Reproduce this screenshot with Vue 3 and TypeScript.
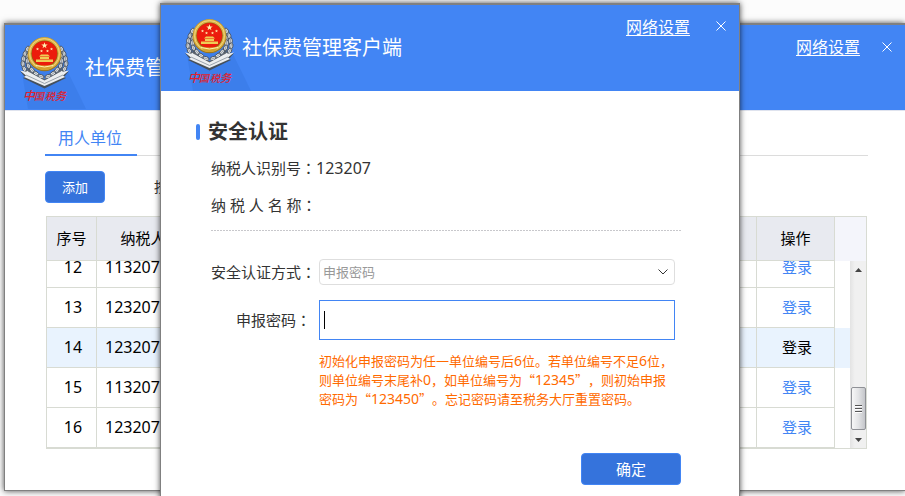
<script setup lang="ts">
import { defineComponent, h, ref } from 'vue'

interface Unit {
  index: number
  taxId: string
}

const units: Unit[] = [
  { index: 12, taxId: '1132072' },
  { index: 13, taxId: '1232070' },
  { index: 14, taxId: '1232072' },
  { index: 15, taxId: '1132072' },
  { index: 16, taxId: '1232070' },
]

const selected = ref(14)
const authMode = ref('password')
const password = ref('')

// Leaves of the wreath, as [x, y, rotation] on the left side; the right side mirrors them.
const leaves: number[][] = [
  [7.5, 12, 28], [5, 17, 12], [3.5, 22, 0], [3, 27, -12], [4.5, 32, -28], [8, 36, -45], [12, 39.5, -58], [17, 42, -70],
  [8, 19, 15], [7.5, 24, 0], [8.5, 29, -18], [12, 33, -38], [16, 36.5, -56], [21, 39.5, -72],
]

const Emblem = defineComponent({
  setup() {
    const leaf = (l: number[], key: string) =>
      h('g', { key, transform: `translate(${l[0]} ${l[1]}) rotate(${l[2]})` }, [
        h('ellipse', { rx: 1.9, ry: 3.1, fill: '#dfe2e5', stroke: '#3d4650', 'stroke-width': 0.8 }),
        h('path', { d: 'M0 -2.4V2.6', stroke: '#737b84', 'stroke-width': 0.6 }),
      ])
    const star = (x: number, y: number, s: number) =>
      h('path', {
        transform: `translate(${x} ${y}) scale(${s})`,
        d: 'M0 -4L1 -1.2L4 -1.2L1.6 .6L2.4 3.4L0 1.7L-2.4 3.4L-1.6 .6L-4 -1.2L-1 -1.2Z',
        fill: '#fff0b0',
      })
    return () =>
      h('svg', { width: 66, height: 72, viewBox: '0 0 66 72', 'aria-hidden': 'true' }, [
        h('path', { d: 'M2 36L8 72H66L46 31Z', fill: '#3b7ce9', opacity: 0.8 }),
        h('path', { d: 'M5 24Q8 36 24.500 42Q41 36 44 24L40 38L24.500 46L9 38Z', fill: '#59626c' }),
        h('g', leaves.map((l, i) => leaf(l, `l${i}`))),
        h('g', { transform: 'translate(49 0) scale(-1 1)' }, leaves.map((l, i) => leaf(l, `r${i}`))),
        h('path', { d: 'M0 34L24.500 44L49 34L44 40L46 41L24.500 51.500L3 41L5 40Z', fill: '#46505b' }),
        h('path', { d: 'M0 33.500L10 35.500L24.500 43.500L39 35.500L49 33.500L43 38.500L45 40L24.500 49L4 40L6 38.500Z', fill: '#eceef0' }),
        h('path', { d: 'M6 38L24.500 46.500L43 38', fill: 'none', stroke: '#9aa2ab', 'stroke-width': 1 }),
        h('circle', { cx: 24.5, cy: 17.2, r: 17, fill: '#9c7620' }),
        h('circle', { cx: 24.5, cy: 16.7, r: 16.4, fill: '#dbb347' }),
        h('circle', { cx: 24.5, cy: 16.6, r: 15, fill: 'none', stroke: '#f5dd86', 'stroke-width': 0.8 }),
        h('circle', { cx: 24.5, cy: 16.8, r: 13.2, fill: '#8f5b12' }),
        h('circle', { cx: 24.5, cy: 16.5, r: 12.6, fill: '#ec1c0c' }),
        star(24.5, 8.5, 0.8),
        star(17.5, 12, 0.4),
        star(21.5, 14, 0.4),
        star(27.5, 14, 0.4),
        star(31.5, 12, 0.4),
        h('path', { d: 'M19 19.500L21 17.500H28L30 19.500ZM20 20H29V22H20ZM16 22.500H33V25H16Z', fill: '#f0cd55' }),
        h('path', { d: 'M15 27Q24.500 30 34 27L30 32Q24.500 34 19 32Z', fill: '#d7a22e' }),
        h('path', { d: 'M16 28.500Q24.500 31.500 33 28.500', fill: 'none', stroke: '#fff0ae', 'stroke-width': 1 }),
        h('text', {
          y: 63, fill: '#e0222e', 'font-style': 'italic', 'font-weight': 500,
          'font-family': '"Noto Sans CJK SC", sans-serif',
        }, [
          h('tspan', { x: 3, 'font-size': 12 }, '中'),
          h('tspan', { x: 14, 'font-size': 10 }, '国'),
          h('tspan', { x: 25, 'font-size': 10 }, '税'),
          h('tspan', { x: 35, 'font-size': 11 }, '务'),
        ]),
      ])
  },
})
</script>

<template>
  <div class="desktop">
    <main class="window">
      <header class="titlebar">
        <Emblem class="emblem" />
        <h1 class="title">社保费管理客户端</h1>
        <a class="settings" href="#">网络设置</a>
        <button class="close" type="button" aria-label="关闭">
          <svg width="10" height="10" viewBox="0 0 10 10"><path d="M.5 .5L9.500 9.500M9.500 .5L.5 9.500" /></svg>
        </button>
      </header>

      <div class="content">
        <nav class="tabs"><a class="tab" href="#">用人单位</a></nav>
        <div class="toolbar">
          <button class="primary add" type="button">添加</button>
          <span>按单位查询</span>
        </div>

        <div class="grid">
          <div class="grid-head">
            <table>
              <colgroup><col class="c-index" /><col class="c-id" /><col /><col class="c-action" /></colgroup>
              <thead>
                <tr><th>序号</th><th>纳税人识别号</th><th>纳税人名称</th><th>操作</th></tr>
              </thead>
            </table>
          </div>
          <div class="grid-body">
            <div class="viewport">
              <div v-for="unit in units" :key="unit.index" class="row" :class="{ selected: unit.index === selected }">
                <table>
                  <colgroup><col class="c-index" /><col class="c-id" /><col /><col class="c-action" /></colgroup>
                  <tbody>
                    <tr @click="selected = unit.index">
                      <td class="num center">{{ unit.index }}</td>
                      <td class="num">{{ unit.taxId }}</td>
                      <td></td>
                      <td class="center"><a href="#">登录</a></td>
                    </tr>
                  </tbody>
                </table>
              </div>
            </div>
            <div class="scrollbar" aria-hidden="true">
              <svg width="7" height="4" viewBox="0 0 7 4"><path d="M0 4L3.500 0L7 4Z" /></svg>
              <div class="thumb"><i></i><i></i><i></i></div>
              <svg width="7" height="4" viewBox="0 0 7 4"><path d="M0 0L3.500 4L7 0Z" /></svg>
            </div>
          </div>
        </div>
      </div>
    </main>

    <section class="window dialog" role="dialog" aria-labelledby="auth-title">
      <header class="titlebar">
        <Emblem class="emblem" />
        <span class="title">社保费管理客户端</span>
        <a class="settings" href="#">网络设置</a>
        <button class="close" type="button" aria-label="关闭">
          <svg width="10" height="10" viewBox="0 0 10 10"><path d="M.5 .5L9.500 9.500M9.500 .5L.5 9.500" /></svg>
        </button>
      </header>

      <form class="auth" @submit.prevent>
        <h2 id="auth-title">安全认证</h2>
        <div class="details">
          <p>纳税人识别号<span class="colon">：</span><span class="num">123207</span></p>
          <p>纳 税 人 名 称<span class="colon">：</span></p>
        </div>
        <div class="fields">
          <label for="mode">安全认证方式<span class="colon">：</span></label>
          <div class="select">
            <select id="mode" v-model="authMode">
              <option value="password">申报密码</option>
            </select>
            <svg width="10" height="6" viewBox="0 0 10 6"><path d="M.5 .5L5 5L9.500 .5" /></svg>
          </div>
          <label class="inset" for="password">申报密码<span class="colon">：</span></label>
          <input id="password" v-model="password" type="password" />
          <p class="hint">
            初始化申报密码为任一单位编号后<b>6</b>位。若单位编号不足<b>6</b>位，<br />则单位编号末尾补<b>0</b>，如单位编号为“<b>12345</b>”，则初始申报<br />密码为“<b>123450</b>”。忘记密码请至税务大厅重置密码。
          </p>
        </div>
        <button class="primary confirm" type="submit">确定</button>
      </form>
    </section>
  </div>
</template>

<style>
body {
  margin: 0;
}
</style>

<style scoped>
.desktop {
  position: relative;
  box-sizing: border-box;
  display: flex;
  min-height: 100vh;
  padding: 23px 0 5px 4px;
  overflow: hidden;
  background: #fcfcfc;
  color: #333;
  font-family: "Noto Sans", "Noto Sans CJK SC", sans-serif;
  font-size: 15px;
  line-height: 24px;
}

.window {
  box-sizing: border-box;
  flex: 1;
  min-width: 0;
  border: 1px solid #808080;
  border-top-width: 2px;
  border-right: 0;
  background: #fff;
  box-shadow: 0 0 6px rgba(0, 0, 0, 0.7);
}

.dialog {
  position: absolute;
  inset: 3px 165px -12px 160px;
  border-right: 1px solid #808080;
}

.titlebar {
  display: flex;
  align-items: flex-start;
  box-sizing: border-box;
  height: 86px;
  padding: 12px 13px 0 15px;
  border-bottom: 1px solid #dfe3ee;
  background: #4285f4;
}

.dialog .titlebar {
  padding-top: 14px;
  padding-left: 24px;
  border-bottom: 0;
}

.emblem {
  flex: none;
}

.title {
  flex: 1;
  margin: 17px 0 0 -1px;
  color: #fff;
  font-size: 20px;
  font-weight: 400;
  line-height: 28px;
  white-space: nowrap;
}

.dialog .title {
  margin: 15px 0 0 -9px;
}

.settings {
  color: #fff;
  font-size: 16px;
  line-height: 24px;
  text-decoration: underline;
  text-underline-offset: 2px;
}

.titlebar .settings {
  margin-top: -2px;
}

.dialog .titlebar .settings {
  margin-top: -4px;
}

.close {
  display: flex;
  margin: 0 0 0 22px;
  padding: 5px 0;
  border: 0;
  background: none;
}

.dialog .close {
  margin: -3px 0 0 26px;
}

.close svg {
  fill: none;
  stroke: #fff;
}

.content {
  padding: 13px 37px 41px 40px;
}

.tabs {
  display: flex;
  height: 31px;
  border-bottom: 1px solid #dcdcdc;
}

.tab {
  height: 30px;
  padding: 0 15px 0 13px;
  border-bottom: 2px solid #4285f4;
  color: #4285f4;
  font-size: 16px;
  line-height: 28px;
  text-decoration: none;
}

.toolbar {
  display: flex;
  align-items: center;
  gap: 49px;
  padding: 15px 0 13px;
  font-size: 14px;
}

.primary {
  height: 32px;
  padding: 0;
  border: 1px solid #4285f4;
  border-radius: 4px;
  background: #3573dc;
  color: #fff;
  font: inherit;
}

.add {
  width: 60px;
  font-size: 13px;
}

.grid {
  margin: 0 1px;
  border: 1px solid #d8dbd3;
  color: #000;
}

.grid table {
  width: 100%;
  border-spacing: 0;
  table-layout: fixed;
}

.c-index {
  width: 50px;
}

.c-id {
  width: 138px;
}

.c-action {
  width: 78px;
}

.grid th,
.grid td {
  box-sizing: border-box;
  padding: 0 0 2px;
  border-right: 1px solid #d8dbd3;
  border-bottom: 1px solid #d8dbd3;
}

.grid th {
  height: 44px;
  background: #e8eaf0;
  font-weight: 400;
}

.grid td {
  height: 40px;
  padding-left: 8px;
}

.grid td.center {
  padding-left: 3px;
  text-align: center;
}

.grid-head {
  padding-right: 31px;
  background: #f4f5fb;
}

.grid-body {
  display: flex;
  height: 187px;
}

.viewport {
  display: flex;
  flex: 1;
  flex-direction: column;
  justify-content: flex-end;
  min-width: 0;
  overflow: hidden;
}

.row {
  flex: none;
  padding-right: 15px;
}

.row.selected {
  background: #e9f3fe;
}

.row a {
  color: #4285f4;
  text-decoration: none;
}

.row.selected a {
  color: #000;
}

.scrollbar {
  display: flex;
  flex-direction: column;
  align-items: center;
  box-sizing: border-box;
  width: 16px;
  padding: 7px 0 6px;
  background: linear-gradient(90deg, #e3e3e3, #f0f0f0 30%, #f0f0f0);
}

.scrollbar svg {
  fill: #444;
}

.thumb {
  display: flex;
  flex-direction: column;
  align-items: center;
  justify-content: center;
  gap: 1px;
  box-sizing: border-box;
  width: 15px;
  height: 43px;
  margin: auto 0 8px;
  border: 1px solid #8f9196;
  border-radius: 2px;
  background: linear-gradient(90deg, #f7f7f7, #e2e3e5 50%, #c4c6ca);
}

.thumb i {
  width: 7px;
  height: 1px;
  border-bottom: 1px solid #fff;
  background: #555;
}

.num {
  font-size: 16px;
}

.colon {
  font-family: "Noto Sans CJK TC", sans-serif;
}

.auth {
  display: flex;
  flex-direction: column;
  padding: 27px 58px 0 35px;
}

.auth p {
  margin: 0;
}

h2 {
  display: flex;
  align-items: center;
  gap: 8px;
  margin: 0 0 10px;
  font-size: 20px;
  line-height: 28px;
}

h2::before {
  width: 4px;
  height: 16px;
  border-radius: 2px;
  background: #4285f4;
  content: "";
}

.details {
  display: grid;
  gap: 13px;
  margin-left: 15px;
  padding-bottom: 14px;
  background: repeating-linear-gradient(90deg, #c8c8cc 0 2px, #fff 2px 3px) 0 100% / 100% 1px no-repeat;
}

.fields {
  display: grid;
  grid-template-columns: 105px 1fr;
  column-gap: 3px;
  align-items: center;
  margin: 28px 6px 45px 15px;
}

label {
  text-align: right;
  white-space: nowrap;
}

.inset {
  padding-right: 5px;
}

.select {
  display: grid;
  align-items: center;
  margin-bottom: 15px;
}

label[for="mode"] {
  margin-bottom: 15px;
}

.select > * {
  grid-area: 1 / 1;
}

.select svg {
  justify-self: end;
  margin-right: 7px;
  fill: none;
  stroke: #333;
  pointer-events: none;
}

select {
  box-sizing: border-box;
  width: 100%;
  height: 26px;
  padding: 0 24px 0 3px;
  border: 1px solid #dedede;
  border-radius: 4px;
  appearance: none;
  background: #fff;
  color: #999;
  font: inherit;
  font-size: 13px;
}

#password {
  box-sizing: border-box;
  width: 100%;
  height: 40px;
  padding: 0 5px;
  border: 1px solid #4285f4;
  border-radius: 0;
  outline: 0;
  background: linear-gradient(#000, #000) 4px 10px / 1px 18px no-repeat #fff;
  font: inherit;
}

.hint {
  grid-column: 2;
  color: #ff6a00;
  font-family: "Noto Sans CJK SC", sans-serif;
  font-size: 13px;
  line-height: 19px;
  text-spacing-trim: space-all;
  white-space: nowrap;
}

.auth .hint {
  margin-top: 11px;
}

.hint b {
  font-family: "Noto Sans", sans-serif;
  font-size: 14px;
  font-weight: 400;
  line-height: 1;
}

.confirm {
  align-self: flex-end;
  width: 100px;
}
</style>
